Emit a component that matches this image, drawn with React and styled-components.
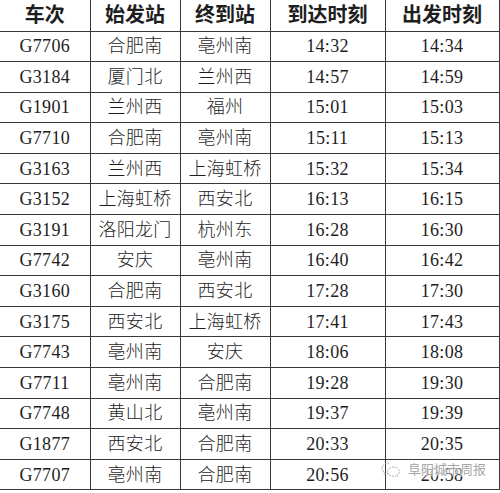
import React from 'react'
import styled, { createGlobalStyle } from 'styled-components'

const GlobalStyle = createGlobalStyle`
  html, body {
    margin: 0;
    padding: 0;
    background: #fff;
  }
`

const trains = [
  ['G7706', '合肥南', '亳州南', '14:32', '14:34'],
  ['G3184', '厦门北', '兰州西', '14:57', '14:59'],
  ['G1901', '兰州西', '福州', '15:01', '15:03'],
  ['G7710', '合肥南', '亳州南', '15:11', '15:13'],
  ['G3163', '兰州西', '上海虹桥', '15:32', '15:34'],
  ['G3152', '上海虹桥', '西安北', '16:13', '16:15'],
  ['G3191', '洛阳龙门', '杭州东', '16:28', '16:30'],
  ['G7742', '安庆', '亳州南', '16:40', '16:42'],
  ['G3160', '合肥南', '西安北', '17:28', '17:30'],
  ['G3175', '西安北', '上海虹桥', '17:41', '17:43'],
  ['G7743', '亳州南', '安庆', '18:06', '18:08'],
  ['G7711', '亳州南', '合肥南', '19:28', '19:30'],
  ['G7748', '黄山北', '亳州南', '19:37', '19:39'],
  ['G1877', '西安北', '合肥南', '20:33', '20:35'],
  ['G7707', '亳州南', '合肥南', '20:56', '20:58'],
]

const headers = ['车次', '始发站', '终到站', '到达时刻', '出发时刻']
const widths = [90, 90, 90, 115, 114]

const Page = styled.div`
  position: relative;
  width: 500px;
  height: 493px;
  overflow: hidden;
  background: #fff;
`

const Table = styled.table`
  width: 499px;
  border-collapse: collapse;
  table-layout: fixed;
  font-family: "Liberation Serif", "Noto Sans CJK SC", serif;
  color: #1e1e1e;
`

const Row = styled.tr`
  height: ${p => (p.$head ? 31 : 30.6)}px;
`

const Cell = styled.td`
  padding: 0;
  text-align: center;
  vertical-align: middle;
  font-size: ${p => (p.$head ? 20 : 18)}px;
  font-weight: ${p => (p.$head ? 600 : 300)};
  line-height: 1;
  border-bottom: 1.5px solid #383838;
  border-right: 1.5px solid #383838;
  white-space: nowrap;
  letter-spacing: ${p => (p.$head ? 0 : 0.3)}px;
`

const Watermark = styled.div`
  position: absolute;
  left: 381px;
  top: 459px;
  display: flex;
  align-items: center;
  gap: 7px;
  font-family: "Noto Sans CJK SC", sans-serif;
  font-size: 13px;
  color: rgba(150, 150, 150, 0.85);
  text-shadow: 0 0 2px #fff, 0 0 2px #fff, 0 0 3px #fff;
`

const Logo = () => (
  <svg width="20" height="16" viewBox="0 0 20 16" fill="none" stroke="rgba(150,150,150,0.8)" strokeWidth="1" strokeDasharray="1.5 1">
    <path d="M8 2c-4 0-7 2.4-7 5.3 0 1.7 1 3.1 2.5 4.1l-.6 2 2.3-1.2c.9.3 1.8.4 2.8.4" />
    <path d="M12.5 6c-3.3 0-6 2.1-6 4.6s2.7 4.6 6 4.6c.8 0 1.5-.1 2.2-.3l1.9 1-.5-1.7c1.5-.9 2.4-2.1 2.4-3.6 0-2.5-2.7-4.6-6-4.6z" />
  </svg>
)

const App = () => (
  <Page>
    <GlobalStyle />
    <Table>
      <colgroup>
        {widths.map((w, i) => <col key={i} style={{ width: w }} />)}
      </colgroup>
      <thead>
        <Row $head>
          {headers.map(h => <Cell as="th" $head key={h}>{h}</Cell>)}
        </Row>
      </thead>
      <tbody>
        {trains.map(t => (
          <Row key={t[0]}>
            {t.map((v, i) => <Cell key={i}>{v}</Cell>)}
          </Row>
        ))}
      </tbody>
    </Table>
    <Watermark>
      <Logo />
      <span>阜阳城市周报</span>
    </Watermark>
  </Page>
)

export default App
